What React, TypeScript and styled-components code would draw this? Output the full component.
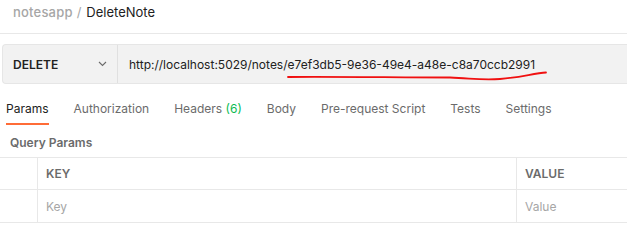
import React from 'react';
import styled, { createGlobalStyle } from 'styled-components';

const GlobalStyle = createGlobalStyle`
    html, body {
        margin: 0;
        padding: 0;
        background: #ffffff;
    }
    body {
        font-family: Inter, "Noto Sans", "Liberation Sans", sans-serif;
        color: #212121;
        -webkit-font-smoothing: antialiased;
    }
`;

const tabs = [
    { label: 'Params', active: true },
    { label: 'Authorization' },
    { label: 'Headers', count: 6 },
    { label: 'Body' },
    { label: 'Pre-request Script' },
    { label: 'Tests' },
    { label: 'Settings' },
];

export default function App() {
    return (
        <Page>
            <GlobalStyle />
            <Breadcrumb>
                <Crumb>notesapp</Crumb>
                <Slash>/</Slash>
                <Current>DeleteNote</Current>
            </Breadcrumb>

            <RequestBar>
                <MethodSelect>
                    <Method>DELETE</Method>
                    <svg width="9" height="6" viewBox="0 0 9 6">
                        <path d="M1 1 L4.5 4.5 L8 1" fill="none" stroke="#6b6b6b" strokeWidth="1.1" />
                    </svg>
                </MethodSelect>
                <Url>http://localhost:5029/notes/e7ef3db5-9e36-49e4-a48e-c8a70ccb2991</Url>
            </RequestBar>

            <TabRow>
                {tabs.map((t) => (
                    <Tab key={t.label} $active={!!t.active}>
                        {t.label}
                        {t.count !== undefined && <Count> ({t.count})</Count>}
                    </Tab>
                ))}
            </TabRow>

            <SectionTitle>Query Params</SectionTitle>

            <Table>
                <Row $height={32}>
                    <Cell />
                    <HeadCell>KEY</HeadCell>
                    <HeadCell>VALUE</HeadCell>
                </Row>
                <Row $height={33}>
                    <Cell />
                    <Placeholder>Key</Placeholder>
                    <Placeholder>Value</Placeholder>
                </Row>
            </Table>

            <Scribble width="627" height="249" viewBox="0 0 627 249">
                <path
                    d="M288 77 C 330 76.5, 400 77.5, 450 77.5 C 470 78, 480 80.5, 500 79 C 520 77.5, 535 73, 546 72.5"
                    fill="none"
                    stroke="#f01010"
                    strokeWidth="1.8"
                    strokeLinecap="round"
                />
            </Scribble>
        </Page>
    );
}

const Page = styled.div`
    position: relative;
    width: 627px;
    height: 249px;
    overflow: hidden;
`;

const Breadcrumb = styled.div`
    display: flex;
    align-items: center;
    height: 34px;
    padding: 0 0 10px 13px;
    box-sizing: border-box;
    border-bottom: 1px solid #e8e8e8;
    font-size: 13px;
    margin-bottom: 10px;
`;

const Crumb = styled.span`
    color: #a6a6a6;
    font-weight: 500;
    letter-spacing: 0.2px;
`;

const Slash = styled.span`
    color: #a6a6a6;
    margin: 0 5px 0 4px;
`;

const Current = styled.span`
    color: #212121;
`;

const RequestBar = styled.div`
    display: flex;
    height: 40px;
    margin-left: 2px;
    box-sizing: border-box;
    background: #f2f2f2;
    border: 1px solid #e6e6e6;
    border-right: none;
    border-radius: 4px 0 0 4px;
`;

const MethodSelect = styled.div`
    display: flex;
    align-items: center;
    justify-content: space-between;
    width: 115px;
    box-sizing: border-box;
    padding: 0 10px 0 10px;
    border-right: 1px solid #e0e0e0;
`;

const Method = styled.span`
    font-size: 12px;
    font-weight: 600;
    color: #212121;
`;

const Url = styled.div`
    display: flex;
    align-items: center;
    padding-left: 11px;
    font-size: 12px;
    color: #212121;
    white-space: nowrap;
`;

const TabRow = styled.div`
    display: flex;
    gap: 25px;
    padding: 0 6px;
    margin-top: 13px;
    height: 30px;
`;

const Tab = styled.div<{ $active: boolean }>`
    position: relative;
    font-size: 12px;
    line-height: 24px;
    color: ${(p) => (p.$active ? '#212121' : '#6b6b6b')};
    white-space: nowrap;
    &::after {
        content: '';
        display: ${(p) => (p.$active ? 'block' : 'none')};
        position: absolute;
        left: 0;
        right: 0;
        top: 26px;
        height: 2px;
        background: #ff6c37;
    }
`;

const Count = styled.span`
    color: #0cbb52;
`;

const SectionTitle = styled.div`
    padding: 6px 10px 0;
    height: 30px;
    box-sizing: border-box;
    font-size: 12px;
    font-weight: 600;
    line-height: 20px;
    color: #6b6b6b;
`;

const Table = styled.div`
    border-top: 1px solid #e8e8e8;
`;

const Row = styled.div<{ $height: number }>`
    display: grid;
    grid-template-columns: 38px 1fr 110px;
    height: ${(p) => p.$height}px;
    border-bottom: 1px solid #e8e8e8;
    box-sizing: border-box;
`;

const Cell = styled.div`
    display: flex;
    align-items: center;
    border-right: 1px solid #e8e8e8;
    padding-left: 8px;
    font-size: 12px;
    &:last-child {
        border-right: none;
    }
`;

const HeadCell = styled(Cell)`
    font-weight: 600;
    color: #6b6b6b;
`;

const Placeholder = styled(Cell)`
    color: #a6a6a6;
`;

const Scribble = styled.svg`
    position: absolute;
    left: 0;
    top: 0;
    pointer-events: none;
`;
